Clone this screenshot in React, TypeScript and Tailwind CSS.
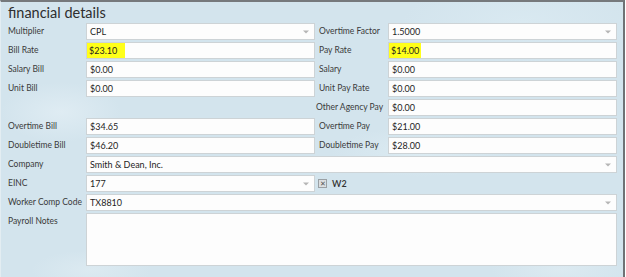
import type { ReactNode } from "react";

const font = { fontFamily: 'Lato, "Liberation Sans", sans-serif' };

function Arrow() {
  return (
    <svg width="6" height="4" viewBox="0 0 6 4" className="ml-auto mr-[5px] shrink-0">
      <path d="M0 0.5 L6 0.5 L3 3.5 Z" fill="#b5b5b5" />
    </svg>
  );
}

function Field({
  value,
  select,
  highlight,
  className = "",
}: {
  value?: string;
  select?: boolean;
  highlight?: string;
  className?: string;
}) {
  return (
    <div
      className={`flex h-[17px] items-center border border-[#cdd3d6] bg-[#fdfdfd] text-[9px] text-[#1e1e1e] ${className}`}
    >
      {highlight ? (
        <span className={`flex h-full items-center bg-[#ffff1a] pl-[2px] ${highlight}`}>
          {value}
        </span>
      ) : (
        <span className="pl-[3px]">{value}</span>
      )}
      {select && <Arrow />}
    </div>
  );
}

function Label({ children, className = "" }: { children?: ReactNode; className?: string }) {
  return (
    <div className={`flex h-[17px] items-center whitespace-nowrap text-[8.5px] text-[#3a3a3a] ${className}`}>
      {children}
    </div>
  );
}

export default function App() {
  return (
    <div className="h-[277px] w-[626px] overflow-hidden bg-white" style={font}>
      <div className="relative h-[277px] w-[625px] border-l border-r-2 border-t-2 border-l-[#e3edf2] border-r-[#6f7275] border-t-[#76797c] bg-[#d3e4ed]">
        {/* watercolor splashes */}
        <div className="pointer-events-none absolute inset-0 bg-[radial-gradient(ellipse_60px_30px_at_60px_110px,#dfecf3,transparent),radial-gradient(ellipse_90px_25px_at_420px_150px,#dcebf2,transparent),radial-gradient(ellipse_60px_20px_at_90px_268px,#dceaf1,transparent),radial-gradient(ellipse_70px_20px_at_560px_268px,#dceaf1,transparent),radial-gradient(ellipse_120px_40px_at_520px_20px,#d9e9f1,transparent)]" />

        <div className="relative">
          <h1 className="pl-[7px] text-[14.5px] leading-[21px] text-[#2e2e2e]">financial details</h1>

          <div className="grid grid-cols-[78px_229px_73px_229px] gap-y-[2px] pl-[7px]">
            <Label>Multiplier</Label>
            <Field value="CPL" select />
            <Label className="pl-[4px]">Overtime Factor</Label>
            <Field value="1.5000" select />

            <Label>Bill Rate</Label>
            <Field value="$23.10" highlight="w-[38px]" />
            <Label className="pl-[4px]">Pay Rate</Label>
            <Field value="$14.00" highlight="w-[32px]" />

            <Label>Salary Bill</Label>
            <Field value="$0.00" />
            <Label className="pl-[4px]">Salary</Label>
            <Field value="$0.00" />

            <Label>Unit Bill</Label>
            <Field value="$0.00" />
            <Label className="pl-[4px]">Unit Pay Rate</Label>
            <Field value="$0.00" />

            <div />
            <div />
            <Label className="pl-[1px]">Other Agency Pay</Label>
            <Field value="$0.00" />

            <Label>Overtime Bill</Label>
            <Field value="$34.65" />
            <Label className="pl-[4px]">Overtime Pay</Label>
            <Field value="$21.00" />

            <Label>Doubletime Bill</Label>
            <Field value="$46.20" />
            <Label className="pl-[4px]">Doubletime Pay</Label>
            <Field value="$28.00" />

            <Label>Company</Label>
            <Field value="Smith & Dean, Inc." select className="col-span-3" />

            <Label>EINC</Label>
            <Field value="177" select />
            <div className="col-span-2 flex h-[17px] items-center gap-[5px] pl-[3px]">
              <span className="flex h-[9px] w-[9px] items-center justify-center border border-[#9aa0a4] bg-[#dcdfe1] text-[7px] leading-none text-[#555]">
                ✕
              </span>
              <span className="text-[9px] font-semibold text-[#333]">W2</span>
            </div>

            <Label>Worker Comp Code</Label>
            <Field value="TX8810" select className="col-span-3" />

            <div className="flex items-start pt-[2px] text-[8.5px] text-[#3a3a3a]">Payroll Notes</div>
            <div className="col-span-3 h-[53px] border border-[#cdd3d6] bg-[#fdfdfd]" />
          </div>
        </div>
      </div>
    </div>
  );
}
